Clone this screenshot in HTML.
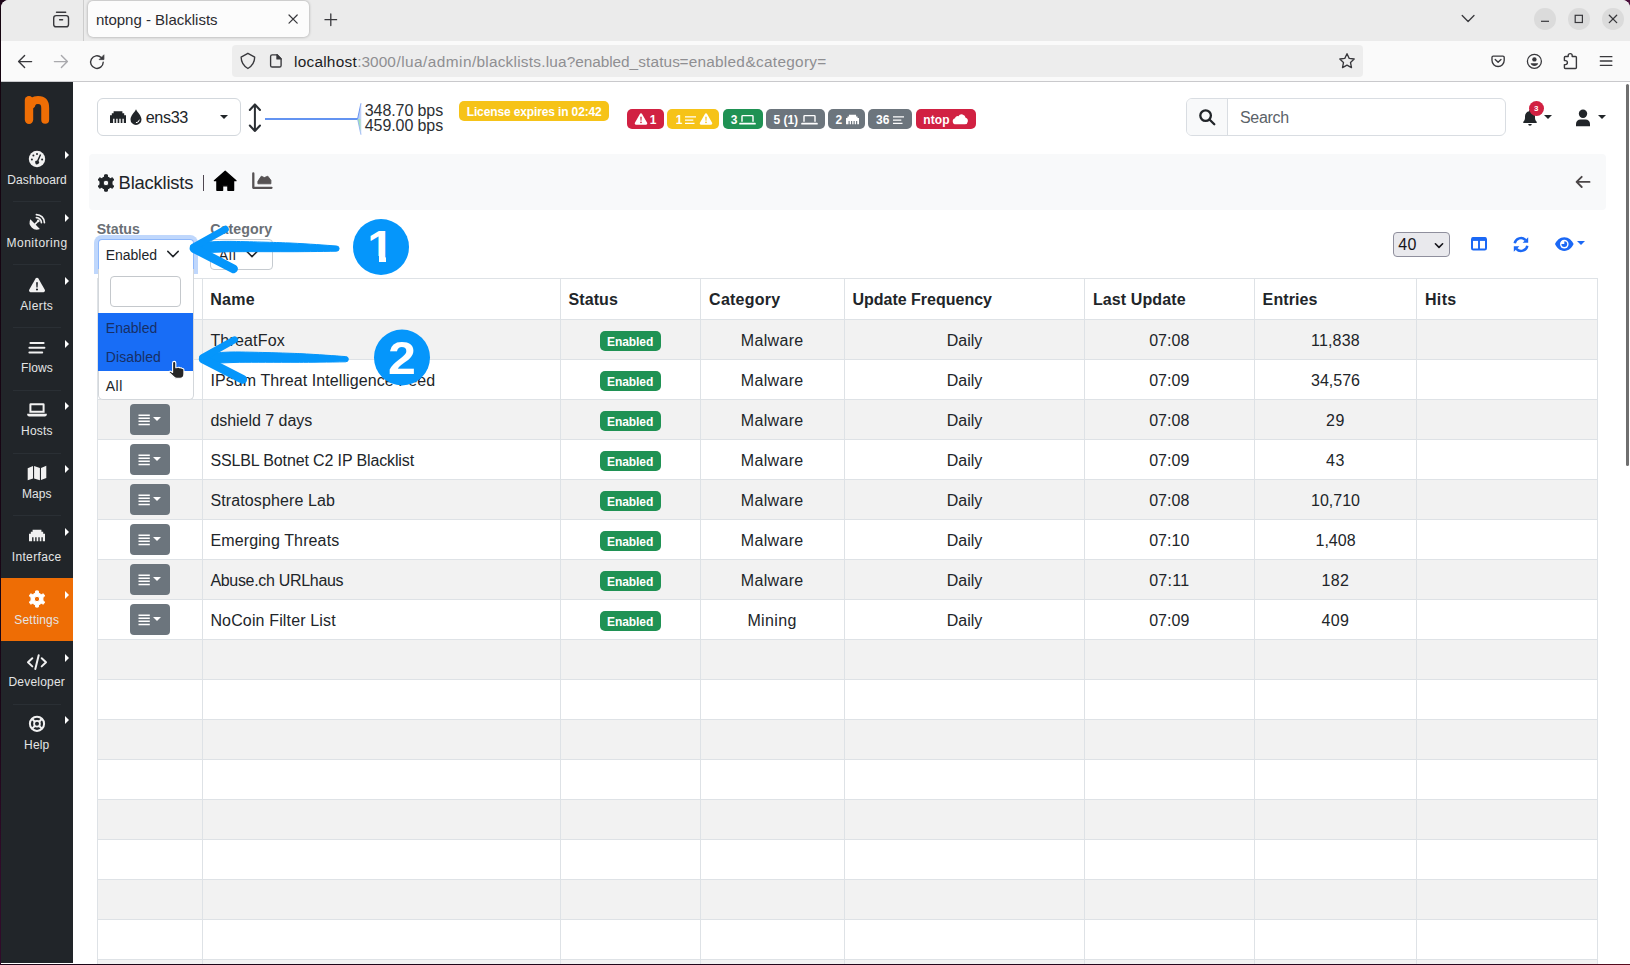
<!DOCTYPE html>
<html lang="en"><head><meta charset="utf-8"><title>ntopng - Blacklists</title>
<style>
html,body{margin:0;padding:0}
body{width:1630px;height:965px;overflow:hidden;position:relative;background:#fff;font-family:"Liberation Sans",sans-serif;color:#212529;font-size:16px}
div,span,svg{box-sizing:border-box}
.a{position:absolute}
.t{position:absolute;white-space:nowrap;line-height:20px;height:20px}
.c{text-align:center}
svg{position:absolute;overflow:visible}
.side{color:#e4e5e6;font-size:12px}
.sep{position:absolute;left:13px;width:48px;height:1px;background:#2a2f34}
.car{position:absolute;left:65px;width:0;height:0;border-left:4.5px solid #fff;border-top:4px solid transparent;border-bottom:4px solid transparent}
.bdg{position:absolute;top:109px;height:20px;border-radius:5px}
.bt{position:absolute;color:#fff;font-weight:700;font-size:12px;white-space:nowrap;line-height:20px}
.row{position:absolute;left:97px;width:1501px;height:40px;border-bottom:1px solid #dee2e6}
.row.s{background:#f2f2f2}
.vl{position:absolute;top:278px;width:1px;height:687px;background:#dee2e6}
.en{position:absolute;left:600px;width:61px;height:20px;border-radius:5px;background:#1f9254}
.ab{position:absolute;left:130px;width:40px;height:31px;border-radius:4px;background:#6c757d}
</style></head><body>
<div class="a" style="left:0;top:0;width:1630px;height:965px;background:linear-gradient(90deg,#1c0517 0,#2a0820 1500px,#4c0f3c 1630px)"></div>
<div class="a" style="left:1px;top:0;width:1629px;height:963.600px;background:#fff;border-radius:8px 8px 0 0;overflow:hidden">
<div class="a" style="left:0;top:0;width:1629px;height:41px;background:#ebebeb"></div>
<div class="a" style="left:0;top:41px;width:1629px;height:40px;background:#fafafa"></div>
<div class="a" style="left:0;top:81px;width:1629px;height:1px;background:#c9c9cc"></div>
</div>
<div class="a" style="left:83px;top:0;width:1px;height:41px;background:#cdcdcd"></div>
<svg style="left:50px;top:8px" width="22" height="22" viewBox="0 0 22 22" fill="none" stroke="#38383c" stroke-width="1.4" stroke-linecap="round"><rect x="3.7" y="7.6" width="14.8" height="11.2" rx="2.4"></rect><path d="M6.5 4.3h9.2M9.6 11.7h3"></path></svg>
<div class="a" style="left:88px;top:1px;width:221px;height:36px;background:#fcfcfc;border-radius:5px;box-shadow:0 0 3px rgba(0,0,0,.35)"></div>
<span class="t " style="left: 95.9px; top: 10.2px; font-size: 15px; color: rgb(43, 43, 48);">ntopng - Blacklists</span>
<svg style="left:288px;top:14px" width="10" height="10" viewBox="0 0 10 10" stroke="#38383c" stroke-width="1.2" stroke-linecap="round"><path d="M1 1l8.2 8.2M9.2 1L1 9.2"></path></svg>
<svg style="left:324px;top:13px" width="14" height="14" viewBox="0 0 14 14" stroke="#38383c" stroke-width="1.3" stroke-linecap="round"><path d="M1 6.7h11.6M6.8 0.9v11.6"></path></svg>
<svg style="left:1461px;top:14px" width="14" height="10" viewBox="0 0 14 10" fill="none" stroke="#38383c" stroke-width="1.3" stroke-linecap="round" stroke-linejoin="round"><path d="M1.2 1.5l5.9 6 5.9-6"></path></svg>
<div class="a" style="left:1534.2px;top:8.2px;width:21.6px;height:21.6px;border-radius:50%;background:#dbdbdb"></div>
<div class="a" style="left:1568.0px;top:8.2px;width:21.6px;height:21.6px;border-radius:50%;background:#dbdbdb"></div>
<div class="a" style="left:1602.2px;top:8.2px;width:21.6px;height:21.6px;border-radius:50%;background:#dbdbdb"></div>
<svg style="left:1540px;top:14px" width="10" height="10" viewBox="0 0 10 10" stroke="#38383c" stroke-width="1.2"><path d="M1 7.3h8"></path></svg>
<svg style="left:1574px;top:14px" width="10" height="10" viewBox="0 0 10 10" fill="none" stroke="#38383c" stroke-width="1.2"><rect x="1.2" y="1.3" width="7.2" height="7.2"></rect></svg>
<svg style="left:1608px;top:14px" width="10" height="10" viewBox="0 0 10 10" stroke="#38383c" stroke-width="1.3" stroke-linecap="round"><path d="M1.3 1.2l7.4 7.4M8.7 1.2L1.3 8.6"></path></svg>
<svg style="left:16px;top:52px" width="20" height="20" viewBox="0 0 20 20" fill="none" stroke="#38383c" stroke-width="1.4" stroke-linecap="round" stroke-linejoin="round"><path d="M15.6 9.6H3M8.6 3.6l-6 6 6 6"></path></svg>
<svg style="left:52px;top:52px" width="20" height="20" viewBox="0 0 20 20" fill="none" stroke="#a9a9ad" stroke-width="1.4" stroke-linecap="round" stroke-linejoin="round"><path d="M2.4 9.6H15M9.4 3.6l6 6-6 6"></path></svg>
<svg style="left:87px;top:52px" width="20" height="20" viewBox="0 0 20 20" fill="none" stroke="#38383c" stroke-width="1.4" stroke-linecap="round"><path d="M16.2 10.2a6.3 6.3 0 1 1-2-4.7"></path><path d="M16.9 3.2v4.4h-4.4z" fill="#38383c" stroke-linejoin="round" stroke-width="0.8"></path></svg>
<div class="a" style="left:232px;top:45px;width:1131px;height:32px;background:#ededed;border-radius:4px"></div>
<svg style="left:0;top:0" width="300" height="90" viewBox="0 0 300 90" fill="none" stroke="#38383c" stroke-width="1.350" stroke-linejoin="round"><path d="M247.900 53.300L254.700 57.100C254.600 62.600 252.400 66 247.900 68.500C243.400 66 241.200 62.600 241.100 57.100Z"></path><path d="M272.200 54.800H277L281.100 58.900V65.400A1.600 1.600 0 0 1 279.500 67H272.200A1.600 1.600 0 0 1 270.600 65.400V56.400A1.600 1.600 0 0 1 272.200 54.800Z"></path><path d="M277 54.800V58.900H281.100Z" fill="#38383c"></path></svg>
<span class="t " style="left: 294px; top: 51.8px; font-size: 15.4px; color: rgb(28, 28, 31); letter-spacing: 0.24px;">localhost</span>
<span class="t " style="left: 357.2px; top: 51.8px; font-size: 15.4px; color: rgb(143, 143, 146); letter-spacing: 0.02px;">:3000</span>
<span class="t " style="left: 396.4px; top: 51.8px; font-size: 15.4px; color: rgb(143, 143, 146); letter-spacing: 0.47px;">/lua</span>
<span class="t " style="left: 423.1px; top: 51.8px; font-size: 15.4px; color: rgb(143, 143, 146); letter-spacing: 0.45px;">/admin</span>
<span class="t " style="left: 472px; top: 51.8px; font-size: 15.4px; color: rgb(143, 143, 146); letter-spacing: 0.22px;">/blacklists.lua</span>
<span class="t " style="left: 566.8px; top: 51.8px; font-size: 15.4px; color: rgb(143, 143, 146); letter-spacing: -0.08px;">?enabled</span>
<span class="t " style="left: 629.5px; top: 51.8px; font-size: 15.4px; color: rgb(143, 143, 146); letter-spacing: 0.15px;">_status</span>
<span class="t " style="left: 679.6px; top: 51.8px; font-size: 15.4px; color: rgb(143, 143, 146); letter-spacing: 0.19px;">=enabled</span>
<span class="t " style="left: 745.5px; top: 51.8px; font-size: 15.4px; color: rgb(143, 143, 146); letter-spacing: 0.28px;">&amp;category=</span>
<svg style="left:1338px;top:52px" width="18" height="18" viewBox="0 0 18 18" fill="none" stroke="#38383c" stroke-width="1.3" stroke-linejoin="round"><path d="M9 1.700l2.200 4.700 5 .6-3.700 3.500 1 5.100L9 13.100l-4.500 2.500 1-5.100L1.800 7l5-.6z"></path></svg>
<svg style="left:1490px;top:53px" width="16.200" height="16.200" viewBox="0 0 18 18" fill="none" stroke="#38383c" stroke-width="1.5" stroke-linecap="round" stroke-linejoin="round"><path d="M3.600 3.500h10.800a1.400 1.400 0 0 1 1.400 1.400v3.300a6.800 6.800 0 0 1-13.600 0V4.900a1.400 1.400 0 0 1 1.400-1.400z"></path><path d="M5.800 7.300L9 10.400l3.200-3.100"></path></svg>
<svg style="left:1525px;top:52px" width="18" height="18" viewBox="0 0 18 18" fill="none" stroke="#38383c" stroke-width="1.3"><circle cx="9.400" cy="9.300" r="7"></circle><circle cx="9.400" cy="7.400" r="2.200" fill="#38383c" stroke="none"></circle><path d="M5.600 11.300h7.600c-.5 1.800-2 2.800-3.800 2.800s-3.300-1-3.800-2.800z" fill="#38383c" stroke="none"></path></svg>
<svg style="left:1561px;top:51px" width="18" height="20" viewBox="0 0 18 20" fill="none" stroke="#38383c" stroke-width="1.4" stroke-linejoin="round"><path d="M7.200 5.500V4.600a2 2 0 0 1 4 0v.9h3.300a.9.900 0 0 1 .9.900v10.200a.9.900 0 0 1-.9.900H4.300a.9.900 0 0 1-.9-.9v-3h1a2 2 0 0 0 0-4h-1V6.400a.9.900 0 0 1 .9-.9z"></path></svg>
<svg style="left:1599px;top:53px" width="16" height="16" viewBox="0 0 16 16" stroke="#38383c" stroke-width="1.3" stroke-linecap="round"><path d="M1.300 3.700h11.600M1.300 8h11.600M1.300 12.300h11.600"></path></svg>
<div class="a" style="left:1px;top:82px;width:72px;height:881px;background:#212529"></div>
<svg style="left:20px;top:90px" width="34" height="40" viewBox="20 90 34 40" fill="none" stroke="#ef6e05" stroke-linecap="round" stroke-linejoin="round"><path d="M29 100.100V119.700" stroke-width="8.400"></path><path d="M31.500 104.500Q32.500 100 38 100Q45.200 100 45.200 108V119.800" stroke-width="7.900"></path></svg>
<div class="a" style="left:1px;top:578px;width:72px;height:63px;background:#ee6d05"></div>
<div class="sep" style="top:201px"></div>
<div class="sep" style="top:264px"></div>
<div class="sep" style="top:327px"></div>
<div class="sep" style="top:390px"></div>
<div class="sep" style="top:453px"></div>
<div class="sep" style="top:515px"></div>
<div class="sep" style="top:704px"></div>
<div class="car" style="top:151px"></div>
<div class="car" style="top:214px"></div>
<div class="car" style="top:276.5px"></div>
<div class="car" style="top:339.5px"></div>
<div class="car" style="top:402px"></div>
<div class="car" style="top:465px"></div>
<div class="car" style="top:528px"></div>
<div class="car" style="top:591px"></div>
<div class="car" style="top:653.5px"></div>
<div class="car" style="top:716px"></div>
<span class="t side" style="left: 7.3px; top: 170.3px; font-size: 12px; letter-spacing: 0.09px;">Dashboard</span>
<span class="t side" style="left: 6.5px; top: 233.3px; font-size: 12px; letter-spacing: 0.51px;">Monitoring</span>
<span class="t side" style="left: 20.2px; top: 296.3px; font-size: 12px; letter-spacing: 0.4px;">Alerts</span>
<span class="t side" style="left: 21px; top: 358px; font-size: 12px; letter-spacing: 0.09px;">Flows</span>
<span class="t side" style="left: 21px; top: 420.9px; font-size: 12px; letter-spacing: 0.22px;">Hosts</span>
<span class="t side" style="left: 22px; top: 484.2px; font-size: 12px; letter-spacing: 0.04px;">Maps</span>
<span class="t side" style="left: 11.7px; top: 547.1px; font-size: 12px; letter-spacing: 0.36px;">Interface</span>
<span class="t side" style="left: 14.3px; top: 610.2px; font-size: 12px; letter-spacing: 0.19px;">Settings</span>
<span class="t side" style="left: 8.5px; top: 672.4px; font-size: 12px; letter-spacing: 0.2px;">Developer</span>
<span class="t side" style="left: 24.1px; top: 735.3px; font-size: 12px; letter-spacing: 0.15px;">Help</span>
<svg style="left:28px;top:150px" width="18" height="18" viewBox="0 0 18 18"><circle cx="9" cy="9" r="8.200" fill="#f1f1f1"></circle><g fill="#212529"><circle cx="3.900" cy="9.600" r="1"></circle><circle cx="5.400" cy="5.600" r="1"></circle><circle cx="9" cy="4" r="1"></circle><circle cx="14.100" cy="9.600" r="1"></circle><path d="M11.900 4.200l1.300.6-2.700 6.300a1.900 1.900 0 1 1-1.400-.6z"></path></g></svg>
<svg style="left:28px;top:213px" width="18" height="18" viewBox="0 0 18 18" fill="none"><path d="M2.300 6.300a7.200 7.200 0 0 0 9.600 9.600z" fill="#f1f1f1"></path><path d="M7.100 11.100l2.800-2.800" stroke="#f1f1f1" stroke-width="1.600" stroke-linecap="round"></path><circle cx="10.300" cy="7.900" r="1.300" fill="#f1f1f1"></circle><path d="M8.400 4.600a5 5 0 0 1 5 5M8.400 1.600a8 8 0 0 1 8 8" stroke="#f1f1f1" stroke-width="1.700" stroke-linecap="round"></path></svg>
<svg style="left:28px;top:276px" width="18" height="18" viewBox="0 0 18 18"><path d="M9 1.800c.6 0 1.100.3 1.400.8l6.400 11.200c.6 1.100-.2 2.400-1.400 2.400H2.600c-1.200 0-2-1.300-1.400-2.400L7.600 2.600c.3-.5.800-.8 1.400-.8z" fill="#f1f1f1"></path><path d="M8.100 6.200h1.800l-.3 5.200H8.400zM9 12.400a1.100 1.100 0 1 1 0 2.200 1.100 1.100 0 0 1 0-2.200z" fill="#212529"></path></svg>
<svg style="left:27px;top:339px" width="20" height="18" viewBox="0 0 20 18" stroke="#f1f1f1" stroke-width="2" stroke-linecap="round"><path d="M3.400 4h13.200M2.400 8.800h15M2.400 13.600h12.800"></path></svg>
<svg style="left:26px;top:401px" width="22" height="18" viewBox="0 0 22 18"><path d="M4.700 2.300h12.600a1.300 1.300 0 0 1 1.300 1.300v8.100H3.400V3.600a1.300 1.300 0 0 1 1.300-1.300zm.7 2v5.400h11.200V4.300z" fill="#f1f1f1" fill-rule="evenodd"></path><path d="M1.200 12.800h19.600v.6a2 2 0 0 1-2 2H3.200a2 2 0 0 1-2-2z" fill="#f1f1f1"></path></svg>
<svg style="left:27px;top:464px" width="20" height="18" viewBox="0 0 20 18" fill="#f1f1f1"><path d="M.700 4.300l5.300-2.200v12.300L.700 16.200zM7.100 2l5.800 1.900v12.400l-5.800-1.900zM14 3.900l5.300-2.200v12.200L14 16.100z"></path></svg>
<svg style="left:28px;top:528px" width="18" height="16" viewBox="0 0 18 16" fill="#f1f1f1"><path d="M4.600 2.300h8.800v2h1.800v2h1.800v7.600h-2.200V9.800h-1.400v4.100h-1.700V9.800h-1.400v4.100H8.600V9.800H7.200v4.100H5.500V9.800H4.100v4.100H1V6.300h1.800v-2h1.800z" transform="translate(0,-.6)"></path></svg>
<svg style="left:28px;top:590px" width="18" height="18" viewBox="0 0 18 18"><path d="M7.36 3.12L7.72 0.90L10.28 0.90L10.64 3.12L13.27 4.64L15.37 3.84L16.66 6.06L14.91 7.48L14.91 10.52L16.66 11.94L15.37 14.16L13.27 13.36L10.64 14.88L10.28 17.10L7.72 17.10L7.36 14.88L4.73 13.36L2.63 14.16L1.34 11.94L3.09 10.52L3.09 7.48L1.34 6.06L2.63 3.84L4.73 4.64ZM11.70 9.00A2.7 2.7 0 1 0 6.30 9.00A2.7 2.7 0 1 0 11.70 9.00Z" fill="#fff" fill-rule="evenodd" stroke="#fff" stroke-width="1" stroke-linejoin="round"></path></svg>
<svg style="left:26px;top:653px" width="22" height="18" viewBox="0 0 22 18" fill="none" stroke="#f1f1f1" stroke-width="2" stroke-linecap="round" stroke-linejoin="round"><path d="M6.300 5.200L2 9.300l4.300 4.100M15.700 5.200L20 9.300l-4.300 4.100M12.700 2.300L9.300 16"></path></svg>
<svg style="left:28px;top:715px" width="18" height="18" viewBox="0 0 18 18" fill="none" stroke="#f1f1f1"><circle cx="9" cy="8.800" r="7.100" stroke-width="2"></circle><circle cx="9" cy="8.800" r="2.900" stroke-width="1.800"></circle><path d="M4 3.800l2.900 2.900M14 3.800l-2.900 2.900M4 13.800l2.900-2.900M14 13.800l-2.900-2.900" stroke-width="2"></path></svg>
<div class="a" style="left:97px;top:98px;width:144px;height:38px;border:1px solid #d3d8dd;border-radius:6px;background:#fff"></div>
<svg style="left:109px;top:109px" width="18" height="16" viewBox="0 0 18 16" fill="#212529"><path d="M4.600 2.300h8.800v2h1.800v2h1.800v7.600h-2.200V9.800h-1.400v4.100h-1.700V9.800h-1.400v4.100H8.600V9.800H7.200v4.100H5.500V9.800H4.100v4.100H1V6.300h1.800v-2h1.800z"></path></svg>
<svg style="left:129px;top:108px" width="14" height="18" viewBox="0 0 14 18"><path d="M7 1.200c1.400 3.200 5.500 6.300 5.500 10.200a5.500 5.500 0 0 1-11 0C1.500 7.500 5.600 4.400 7 1.200z" fill="#212529"></path><path d="M7.300 14.700a3.100 3.100 0 0 0 3-2.600" fill="none" stroke="#fff" stroke-width="1" stroke-linecap="round"></path></svg>
<span class="t " style="left: 145.7px; top: 107.2px; font-size: 16.2px; color: rgb(33, 37, 41); letter-spacing: -0.36px;">ens33</span>
<div class="a" style="left:220px;top:114.800px;width:0;height:0;border-top:4.700px solid #212529;border-left:4.300px solid transparent;border-right:4.300px solid transparent"></div>
<svg style="left:246px;top:102px" width="18" height="32" viewBox="0 0 18 32" fill="none" stroke="#2a2e33" stroke-width="2" stroke-linecap="round" stroke-linejoin="round"><path d="M8.900 2.500v26.500M3.800 8L8.900 2.500l5.100 5.500M3.800 23.500L8.900 29l5.100-5.500"></path></svg>
<svg style="left:264px;top:100px" width="100" height="36" viewBox="0 0 100 36" fill="none"><path d="M1 18.900h93" stroke="#2f6fed" stroke-width="1.500"></path><path d="M93.600 18.900L96.900 3.400V18.900Z" fill="#b9cdf8"></path><path d="M93.600 18.900L96.900 34.600V18.900Z" fill="#a5e3b6"></path><path d="M93.600 18.900L96.900 3.400" stroke="#5d8df0" stroke-width=".9"></path><path d="M93.600 18.900L96.900 34.600" stroke="#8fb0f3" stroke-width=".9"></path><path d="M96.900 3.400V34.600" stroke="#c5d6fa" stroke-width=".7"></path></svg>
<span class="t " style="left: 364.8px; top: 100.7px; font-size: 16px; color: rgb(43, 47, 51); letter-spacing: -0.09px;">348.70 bps</span>
<span class="t " style="left: 364.8px; top: 115.9px; font-size: 16px; color: rgb(43, 47, 51); letter-spacing: -0.09px;">459.00 bps</span>
<div class="a" style="left:459px;top:101px;width:150px;height:20px;border-radius:5px;background:#f6c318"></div>
<span class="t " style="left: 466.7px; top: 101.9px; font-size: 12px; font-weight: 700; color: rgb(255, 255, 255); letter-spacing: -0.13px;">License expires in 02:42</span>
<div class="bdg" style="left:627px;width:36.6px;background:#d12142"></div>
<div class="bdg" style="left:667px;width:51.6px;background:#f6c318"></div>
<div class="bdg" style="left:723px;width:39.7px;background:#1f9254"></div>
<div class="bdg" style="left:766px;width:58.7px;background:#6c757d"></div>
<div class="bdg" style="left:828.3px;width:36.5px;background:#6c757d"></div>
<div class="bdg" style="left:868px;width:43.5px;background:#6c757d"></div>
<div class="bdg" style="left:916px;width:59.7px;background:#d12142"></div>
<svg style="left:634.3px;top:112.3px" width="14" height="14" viewBox="0 0 14 14"><path d="M7 1.300c.5 0 .9.200 1.100.7l5 8.800c.5.900-.1 1.900-1.100 1.900H2c-1 0-1.600-1-1.100-1.900l5-8.800c.2-.5.600-.7 1.100-.7z" fill="#fff"></path><path d="M6.300 4.700h1.400l-.25 4H6.550zM7 9.500a.85.85 0 1 1 0 1.700.85.850 0 0 1 0-1.700z" fill="#d12142"></path></svg>
<span class="t " style="left: 649.8px; top: 110.2px; font-size: 12px; font-weight: 700; color: rgb(255, 255, 255); letter-spacing: -1.09px;">1</span>
<span class="t " style="left: 675.7px; top: 110.2px; font-size: 12px; font-weight: 700; color: rgb(255, 255, 255); letter-spacing: -1.19px;">1</span>
<svg style="left:684.2px;top:114px" width="13" height="12" viewBox="0 0 13 12" stroke="#fff" stroke-width="1.300"><path d="M1 2.800h11M1 6.100h8.3M1 9.400h9.5"></path></svg>
<svg style="left:698.5px;top:112.3px" width="14" height="14" viewBox="0 0 14 14"><path d="M7 1.300c.5 0 .9.200 1.100.7l5 8.800c.5.900-.1 1.900-1.100 1.900H2c-1 0-1.600-1-1.100-1.900l5-8.800c.2-.5.600-.7 1.100-.7z" fill="#fff"></path><path d="M6.300 4.700h1.400l-.25 4H6.550zM7 9.500a.85.85 0 1 1 0 1.700.85.850 0 0 1 0-1.700z" fill="#f6c318"></path></svg>
<span class="t " style="left: 730.8px; top: 110.2px; font-size: 12px; font-weight: 700; color: rgb(255, 255, 255); letter-spacing: -0.29px;">3</span>
<svg style="left:739.3px;top:113.6px" width="17" height="12" viewBox="0 0 17 12" fill="none" stroke="#fff"><path d="M3 7.700V2.400a.8.800 0 0 1 .8-.8h9.400a.8.800 0 0 1 .8.800v5.300" stroke-width="1.400"></path><path d="M1 9.700h15" stroke-width="1.700" stroke-linecap="round"></path></svg>
<span class="t " style="left: 773.5px; top: 110.2px; font-size: 12px; font-weight: 700; color: rgb(255, 255, 255); letter-spacing: -0.04px;">5 (1)</span>
<svg style="left:801px;top:113.6px" width="17" height="12" viewBox="0 0 17 12" fill="none" stroke="#fff"><path d="M3 7.700V2.400a.8.800 0 0 1 .8-.8h9.400a.8.800 0 0 1 .8.800v5.300" stroke-width="1.400"></path><path d="M1 9.700h15" stroke-width="1.700" stroke-linecap="round"></path></svg>
<span class="t " style="left: 835.5px; top: 110.2px; font-size: 12px; font-weight: 700; color: rgb(255, 255, 255); letter-spacing: -0.29px;">2</span>
<svg style="left:844.500px;top:113px" width="15" height="13" viewBox="0 0 18 16" fill="#fff"><path d="M4.600 2.300h8.800v2h1.800v2h1.800v7.600h-2.200V9.800h-1.400v4.100h-1.700V9.800h-1.400v4.100H8.600V9.800H7.200v4.100H5.500V9.800H4.100v4.100H1V6.300h1.800v-2h1.800z"></path></svg>
<span class="t " style="left: 875.9px; top: 110.2px; font-size: 12px; font-weight: 700; color: rgb(255, 255, 255); letter-spacing: 0.12px;">36</span>
<svg style="left:892.4px;top:114px" width="13" height="12" viewBox="0 0 13 12" stroke="#fff" stroke-width="1.300"><path d="M1 2.800h11M1 6.100h8.3M1 9.400h9.5"></path></svg>
<span class="t " style="left: 923.2px; top: 110.2px; font-size: 12px; font-weight: 700; color: rgb(255, 255, 255); letter-spacing: 0.15px;">ntop</span>
<svg style="left:951.800px;top:113.400px" width="16.200" height="12.600" viewBox="0 0 18 14"><path d="M4.300 12.600a3.400 3.400 0 0 1-.9-6.700 2.700 2.700 0 0 1 3.700-2.300 4.300 4.300 0 0 1 8 1.800 3.700 3.700 0 0 1-.9 7.200z" fill="#fff"></path></svg>
<div class="a" style="left:1186px;top:98px;width:320px;height:38px;border:1px solid #d9dde2;border-radius:6px;background:#fff;overflow:hidden"><div class="a" style="left:0;top:0;width:41px;height:36px;background:#f8f9fa;border-right:1px solid #d9dde2"></div></div>
<svg style="left:1198px;top:108px" width="18" height="18" viewBox="0 0 18 18" fill="none" stroke="#212529" stroke-width="2.300" stroke-linecap="round"><circle cx="7.600" cy="7.600" r="5.300"></circle><path d="M11.700 11.700l4.600 4.600"></path></svg>
<span class="t " style="left: 1240px; top: 107.5px; font-size: 16px; color: rgb(91, 98, 105); letter-spacing: -0.3px;">Search</span>
<svg style="left:1521px;top:108px" width="18" height="20" viewBox="0 0 18 20" fill="#212529"><path d="M9 1.800c.5 0 .9.400.9.900v.5c2.400.4 4.100 2.500 4.100 5v1.500c0 1.600.6 3 1.700 4.100.4.400.1 1.200-.5 1.200H2.800c-.6 0-.9-.8-.5-1.200C3.400 12.700 4 11.300 4 9.700V8.200c0-2.500 1.700-4.600 4.100-5v-.5c0-.5.400-.9.900-.9zM7.200 16h3.600a1.800 1.800 0 0 1-3.600 0z"></path></svg>
<div class="a" style="left:1529px;top:100.500px;width:15px;height:15px;border-radius:50%;background:#d12142"></div>
<span class="t " style="left: 1534.1px; top: 98.9px; font-size: 8px; font-weight: 700; color: rgb(255, 255, 255); letter-spacing: 0.25px;">3</span>
<div class="a" style="left:1544px;top:115px;width:0;height:0;border-top:4.500px solid #212529;border-left:4.500px solid transparent;border-right:4.500px solid transparent"></div>
<svg style="left:1575px;top:109px" width="16" height="18" viewBox="0 0 16 18" fill="#212529"><circle cx="8" cy="4.800" r="4.200"></circle><path d="M1 17.200v-2.300c0-2.500 2-4.300 4.500-4.300h5c2.500 0 4.500 1.800 4.500 4.300v2.300z"></path></svg>
<div class="a" style="left:1597.500px;top:115px;width:0;height:0;border-top:4.500px solid #212529;border-left:4.500px solid transparent;border-right:4.500px solid transparent"></div>
<div class="a" style="left:1626px;top:84px;width:3px;height:382px;border-radius:2px;background:#6f6f6f"></div>
<div class="a" style="left:89px;top:154px;width:1517px;height:55.500px;border-radius:4px;background:#f8f9fa"></div>
<svg style="left:96.500px;top:173.500px" width="18" height="18" viewBox="0 0 18 18"><path d="M7.33 3.03L7.70 0.80L10.30 0.80L10.67 3.03L13.34 4.57L15.45 3.78L16.75 6.03L15.01 7.46L15.01 10.54L16.75 11.97L15.45 14.22L13.34 13.43L10.67 14.97L10.30 17.20L7.70 17.20L7.33 14.97L4.66 13.43L2.55 14.22L1.25 11.97L2.99 10.54L2.99 7.46L1.25 6.03L2.55 3.78L4.66 4.57ZM11.80 9.00A2.8 2.8 0 1 0 6.20 9.00A2.8 2.8 0 1 0 11.80 9.00Z" fill="#212529" fill-rule="evenodd" stroke="#212529" stroke-width="1" stroke-linejoin="round"></path></svg>
<span class="t " style="left: 118.6px; top: 172.8px; font-size: 18.4px; color: rgb(33, 37, 41); letter-spacing: -0.2px;">Blacklists</span>
<div class="a" style="left:202.800px;top:174.800px;width:1.200px;height:15.800px;background:#4f4750"></div>
<svg style="left:0;top:0" width="300" height="200" viewBox="0 0 300 200"><path d="M225.200 171.300L236 180.700H233.600V190.300H227.900V185.800H222.600V190.300H216.900V180.700H214.400Z" fill="#000" stroke="#000" stroke-width="1.300" stroke-linejoin="round"></path></svg>
<svg style="left:0;top:0" width="300" height="200" viewBox="0 0 300 200"><path d="M253.300 173.400V187.800H271.500" fill="none" stroke="#565253" stroke-width="2.300" stroke-linecap="round" stroke-linejoin="round"></path><path d="M257.900 183.800V181.300L261.300 176.200L264.300 177.600L267.800 176.200L270.900 180.300V183.800Z" fill="#565253" stroke="#565253" stroke-width=".9" stroke-linejoin="round"></path></svg>
<svg style="left:1574px;top:174px" width="18" height="16" viewBox="0 0 18 16" fill="none" stroke="#4b4647" stroke-width="1.900" stroke-linecap="round" stroke-linejoin="round"><path d="M15.500 7.900H3M7.700 2.800L2.600 7.900l5.100 5.100"></path></svg>
<span class="t " style="left: 96.7px; top: 219.2px; font-size: 14.2px; font-weight: 700; color: rgb(106, 111, 117); letter-spacing: -0.03px;">Status</span>
<span class="t " style="left: 210.2px; top: 219.2px; font-size: 14.2px; font-weight: 700; color: rgb(106, 111, 117); letter-spacing: 0.08px;">Category</span>
<div class="a" style="left:97.500px;top:239.300px;width:96.200px;height:30.300px;border:1px solid #8fb8fb;border-bottom:none;border-radius:4px 4px 0 0;background:#fff;box-shadow:0 0 0 4px #bfd7fc"></div>
<span class="t " style="left: 105.7px; top: 245.1px; font-size: 14px; color: rgb(33, 37, 41); letter-spacing: -0.01px;">Enabled</span>
<svg style="left:166px;top:249px" width="14" height="10" viewBox="0 0 14 10" fill="none" stroke="#212529" stroke-width="1.500" stroke-linecap="round" stroke-linejoin="round"><path d="M1.800 2.400l5.200 5.200 5.200-5.200"></path></svg>
<div class="a" style="left:210px;top:238.900px;width:63px;height:31px;border:1px solid #c6cbd0;border-radius:4px;background:#fff"></div>
<span class="t " style="left: 218.7px; top: 245.1px; font-size: 14px; color: rgb(33, 37, 41); letter-spacing: 0.75px;">All</span>
<svg style="left:244.500px;top:249px" width="14" height="10" viewBox="0 0 14 10" fill="none" stroke="#212529" stroke-width="1.500" stroke-linecap="round" stroke-linejoin="round"><path d="M1.800 2.400l5.200 5.200 5.200-5.200"></path></svg>
<div class="a" style="left:1393px;top:232.200px;width:57px;height:24.500px;border:1px solid #8f8f9d;border-radius:4px;background:#e9e9ed"></div>
<span class="t " style="left: 1398.3px; top: 235.1px; font-size: 16px; color: rgb(21, 20, 26); letter-spacing: 0.35px;">40</span>
<svg style="left:1432.900px;top:240.700px" width="12" height="10" viewBox="0 0 12 10" fill="none" stroke="#15141a" stroke-width="1.600" stroke-linecap="round" stroke-linejoin="round"><path d="M2.400 2.800l3.600 3.600 3.600-3.600"></path></svg>
<svg style="left:1470px;top:236.300px" width="18" height="16" viewBox="0 0 18 16" fill="none" stroke="#1b68f5"><rect x="2" y="2" width="14" height="11.500" rx="1.300" stroke-width="2"></rect><path d="M2 3.200h14" stroke-width="3.400"></path><path d="M9 3v10" stroke-width="1.900"></path></svg>
<svg style="left:1512px;top:235.600px" width="18" height="17" viewBox="0 0 18 17" fill="none" stroke="#1b68f5" stroke-width="2.500"><path d="M2.700 7.300a6.300 6.300 0 0 1 10.900-3.100"></path><path d="M15.300 9.700a6.300 6.300 0 0 1-10.900 3.100"></path><path d="M16.200 1.200v5.600h-5.600z" fill="#1b68f5" stroke="none"></path><path d="M1.800 15.800v-5.600h5.600z" fill="#1b68f5" stroke="none"></path></svg>
<svg style="left:1554px;top:235.500px" width="21" height="17" viewBox="0 0 21 17"><path d="M10.300 1.200c4.500 0 7.800 3.300 9.300 6.900-1.500 3.600-4.800 6.900-9.300 6.900S2.500 11.700 1 8.100c1.500-3.600 4.800-6.900 9.300-6.900z" fill="#1b68f5"></path><circle cx="10.300" cy="8.100" r="4.300" fill="#fff"></circle><circle cx="10.300" cy="8.100" r="2.900" fill="#1b68f5"></circle><path d="M10.300 8.100V4.600a3.500 3.500 0 0 0-3.500 3.500z" fill="#fff"></path></svg>
<div class="a" style="left:1577px;top:241px;width:0;height:0;border-top:4.500px solid #1b68f5;border-left:4px solid transparent;border-right:4px solid transparent"></div>
<div class="a" style="left:97px;top:278px;width:1501px;height:1px;background:#dee2e6"></div>
<div class="a" style="left:97px;top:319px;width:1501px;height:1px;background:#dee2e6"></div>
<div class="row s" style="top:320px"></div>
<div class="row" style="top:360px"></div>
<div class="row s" style="top:400px"></div>
<div class="row" style="top:440px"></div>
<div class="row s" style="top:480px"></div>
<div class="row" style="top:520px"></div>
<div class="row s" style="top:560px"></div>
<div class="row" style="top:600px"></div>
<div class="row s" style="top:640px"></div>
<div class="row" style="top:680px"></div>
<div class="row s" style="top:720px"></div>
<div class="row" style="top:760px"></div>
<div class="row s" style="top:800px"></div>
<div class="row" style="top:840px"></div>
<div class="row s" style="top:880px"></div>
<div class="row" style="top:920px"></div>
<div class="row s" style="top:960px"></div>
<div class="vl" style="left:97px"></div>
<div class="vl" style="left:202px"></div>
<div class="vl" style="left:560px"></div>
<div class="vl" style="left:700px"></div>
<div class="vl" style="left:844px"></div>
<div class="vl" style="left:1084px"></div>
<div class="vl" style="left:1254px"></div>
<div class="vl" style="left:1416px"></div>
<div class="vl" style="left:1597px"></div>
<span class="t " style="left: 210.3px; top: 289.8px; font-size: 16px; font-weight: 700; color: rgb(33, 37, 41); letter-spacing: 0.26px;">Name</span>
<span class="t " style="left: 568.4px; top: 289.8px; font-size: 16px; font-weight: 700; color: rgb(33, 37, 41); letter-spacing: 0.12px;">Status</span>
<span class="t " style="left: 709.1px; top: 289.8px; font-size: 16px; font-weight: 700; color: rgb(33, 37, 41); letter-spacing: 0.23px;">Category</span>
<span class="t " style="left: 852.5px; top: 289.8px; font-size: 16px; font-weight: 700; color: rgb(33, 37, 41); letter-spacing: -0.01px;">Update Frequency</span>
<span class="t " style="left: 1092.9px; top: 289.8px; font-size: 16px; font-weight: 700; color: rgb(33, 37, 41); letter-spacing: 0.11px;">Last Update</span>
<span class="t " style="left: 1262.6px; top: 289.8px; font-size: 16px; font-weight: 700; color: rgb(33, 37, 41); letter-spacing: 0.11px;">Entries</span>
<span class="t " style="left: 1424.9px; top: 289.8px; font-size: 16px; font-weight: 700; color: rgb(33, 37, 41); letter-spacing: 0.37px;">Hits</span>
<span class="t " style="left: 210.4px; top: 330.9px; font-size: 16px; color: rgb(33, 37, 41); letter-spacing: 0.18px;">ThreatFox</span>
<div class="en" style="top:331px"></div>
<span class="t " style="left: 607px; top: 332.2px; font-size: 12px; font-weight: 700; color: rgb(255, 255, 255); letter-spacing: -0.07px;">Enabled</span>
<span class="t " style="left: 740.8px; top: 330.9px; font-size: 16px; color: rgb(33, 37, 41); letter-spacing: 0.33px;">Malware</span>
<span class="t " style="left: 946.7px; top: 330.9px; font-size: 16px; color: rgb(33, 37, 41); letter-spacing: 0.03px;">Daily</span>
<span class="t " style="left: 1149.2px; top: 330.9px; font-size: 16px; color: rgb(33, 37, 41); letter-spacing: 0.03px;">07:08</span>
<span class="t " style="left: 1311px; top: 330.9px; font-size: 16px; color: rgb(33, 37, 41); letter-spacing: 0.19px;">11,838</span>
<span class="t " style="left: 210.4px; top: 370.9px; font-size: 16px; color: rgb(33, 37, 41); letter-spacing: 0.09px;">IPsum Threat Intelligence Feed</span>
<div class="en" style="top:371px"></div>
<span class="t " style="left: 607px; top: 372.2px; font-size: 12px; font-weight: 700; color: rgb(255, 255, 255); letter-spacing: -0.07px;">Enabled</span>
<span class="t " style="left: 740.8px; top: 370.9px; font-size: 16px; color: rgb(33, 37, 41); letter-spacing: 0.33px;">Malware</span>
<span class="t " style="left: 946.7px; top: 370.9px; font-size: 16px; color: rgb(33, 37, 41); letter-spacing: 0.03px;">Daily</span>
<span class="t " style="left: 1149.2px; top: 370.9px; font-size: 16px; color: rgb(33, 37, 41); letter-spacing: 0.03px;">07:09</span>
<span class="t " style="left: 1311px; top: 370.9px; font-size: 16px; color: rgb(33, 37, 41);">34,576</span>
<span class="t " style="left: 210.4px; top: 410.9px; font-size: 16px; color: rgb(33, 37, 41); letter-spacing: -0.03px;">dshield 7 days</span>
<div class="en" style="top:411px"></div>
<span class="t " style="left: 607px; top: 412.2px; font-size: 12px; font-weight: 700; color: rgb(255, 255, 255); letter-spacing: -0.07px;">Enabled</span>
<span class="t " style="left: 740.8px; top: 410.9px; font-size: 16px; color: rgb(33, 37, 41); letter-spacing: 0.33px;">Malware</span>
<span class="t " style="left: 946.7px; top: 410.9px; font-size: 16px; color: rgb(33, 37, 41); letter-spacing: 0.03px;">Daily</span>
<span class="t " style="left: 1149.2px; top: 410.9px; font-size: 16px; color: rgb(33, 37, 41); letter-spacing: 0.03px;">07:08</span>
<span class="t " style="left: 1326.1px; top: 410.9px; font-size: 16px; color: rgb(33, 37, 41); letter-spacing: 0.5px;">29</span>
<div class="ab" style="top:404px"><svg style="left:8.300px;top:9.800px" width="13" height="12" viewBox="0 0 13 12" stroke="#fff" stroke-width="1.500"><path d="M.5 1.200h11.300M.5 4.200h11.300M.5 7.200h11.300M.5 10.400h11.300"></path></svg><div class="a" style="left:22.900px;top:13px;width:0;height:0;border-top:4.400px solid #fff;border-left:4.100px solid transparent;border-right:4.100px solid transparent"></div></div>
<span class="t " style="left: 210.4px; top: 450.9px; font-size: 16px; color: rgb(33, 37, 41); letter-spacing: -0.13px;">SSLBL Botnet C2 IP Blacklist</span>
<div class="en" style="top:451px"></div>
<span class="t " style="left: 607px; top: 452.2px; font-size: 12px; font-weight: 700; color: rgb(255, 255, 255); letter-spacing: -0.07px;">Enabled</span>
<span class="t " style="left: 740.8px; top: 450.9px; font-size: 16px; color: rgb(33, 37, 41); letter-spacing: 0.33px;">Malware</span>
<span class="t " style="left: 946.7px; top: 450.9px; font-size: 16px; color: rgb(33, 37, 41); letter-spacing: 0.03px;">Daily</span>
<span class="t " style="left: 1149.2px; top: 450.9px; font-size: 16px; color: rgb(33, 37, 41); letter-spacing: 0.03px;">07:09</span>
<span class="t " style="left: 1326.1px; top: 450.9px; font-size: 16px; color: rgb(33, 37, 41); letter-spacing: 0.5px;">43</span>
<div class="ab" style="top:444px"><svg style="left:8.300px;top:9.800px" width="13" height="12" viewBox="0 0 13 12" stroke="#fff" stroke-width="1.500"><path d="M.5 1.200h11.300M.5 4.200h11.300M.5 7.200h11.300M.5 10.400h11.300"></path></svg><div class="a" style="left:22.900px;top:13px;width:0;height:0;border-top:4.400px solid #fff;border-left:4.100px solid transparent;border-right:4.100px solid transparent"></div></div>
<span class="t " style="left: 210.4px; top: 490.9px; font-size: 16px; color: rgb(33, 37, 41); letter-spacing: 0.12px;">Stratosphere Lab</span>
<div class="en" style="top:491px"></div>
<span class="t " style="left: 607px; top: 492.2px; font-size: 12px; font-weight: 700; color: rgb(255, 255, 255); letter-spacing: -0.07px;">Enabled</span>
<span class="t " style="left: 740.8px; top: 490.9px; font-size: 16px; color: rgb(33, 37, 41); letter-spacing: 0.33px;">Malware</span>
<span class="t " style="left: 946.7px; top: 490.9px; font-size: 16px; color: rgb(33, 37, 41); letter-spacing: 0.03px;">Daily</span>
<span class="t " style="left: 1149.2px; top: 490.9px; font-size: 16px; color: rgb(33, 37, 41); letter-spacing: 0.03px;">07:08</span>
<span class="t " style="left: 1311px; top: 490.9px; font-size: 16px; color: rgb(33, 37, 41);">10,710</span>
<div class="ab" style="top:484px"><svg style="left:8.300px;top:9.800px" width="13" height="12" viewBox="0 0 13 12" stroke="#fff" stroke-width="1.500"><path d="M.5 1.200h11.300M.5 4.200h11.300M.5 7.200h11.300M.5 10.400h11.300"></path></svg><div class="a" style="left:22.900px;top:13px;width:0;height:0;border-top:4.400px solid #fff;border-left:4.100px solid transparent;border-right:4.100px solid transparent"></div></div>
<span class="t " style="left: 210.4px; top: 530.9px; font-size: 16px; color: rgb(33, 37, 41); letter-spacing: 0.13px;">Emerging Threats</span>
<div class="en" style="top:531px"></div>
<span class="t " style="left: 607px; top: 532.2px; font-size: 12px; font-weight: 700; color: rgb(255, 255, 255); letter-spacing: -0.07px;">Enabled</span>
<span class="t " style="left: 740.8px; top: 530.9px; font-size: 16px; color: rgb(33, 37, 41); letter-spacing: 0.33px;">Malware</span>
<span class="t " style="left: 946.7px; top: 530.9px; font-size: 16px; color: rgb(33, 37, 41); letter-spacing: 0.03px;">Daily</span>
<span class="t " style="left: 1149.2px; top: 530.9px; font-size: 16px; color: rgb(33, 37, 41); letter-spacing: 0.03px;">07:10</span>
<span class="t " style="left: 1315.5px; top: 530.9px; font-size: 16px; color: rgb(33, 37, 41);">1,408</span>
<div class="ab" style="top:524px"><svg style="left:8.300px;top:9.800px" width="13" height="12" viewBox="0 0 13 12" stroke="#fff" stroke-width="1.500"><path d="M.5 1.200h11.300M.5 4.200h11.300M.5 7.200h11.300M.5 10.400h11.300"></path></svg><div class="a" style="left:22.900px;top:13px;width:0;height:0;border-top:4.400px solid #fff;border-left:4.100px solid transparent;border-right:4.100px solid transparent"></div></div>
<span class="t " style="left: 210.4px; top: 570.9px; font-size: 16px; color: rgb(33, 37, 41); letter-spacing: -0.31px;">Abuse.ch URLhaus</span>
<div class="en" style="top:571px"></div>
<span class="t " style="left: 607px; top: 572.2px; font-size: 12px; font-weight: 700; color: rgb(255, 255, 255); letter-spacing: -0.07px;">Enabled</span>
<span class="t " style="left: 740.8px; top: 570.9px; font-size: 16px; color: rgb(33, 37, 41); letter-spacing: 0.33px;">Malware</span>
<span class="t " style="left: 946.7px; top: 570.9px; font-size: 16px; color: rgb(33, 37, 41); letter-spacing: 0.03px;">Daily</span>
<span class="t " style="left: 1149.2px; top: 570.9px; font-size: 16px; color: rgb(33, 37, 41); letter-spacing: 0.27px;">07:11</span>
<span class="t " style="left: 1321.6px; top: 570.9px; font-size: 16px; color: rgb(33, 37, 41); letter-spacing: 0.33px;">182</span>
<div class="ab" style="top:564px"><svg style="left:8.300px;top:9.800px" width="13" height="12" viewBox="0 0 13 12" stroke="#fff" stroke-width="1.500"><path d="M.5 1.200h11.300M.5 4.200h11.300M.5 7.200h11.300M.5 10.400h11.300"></path></svg><div class="a" style="left:22.900px;top:13px;width:0;height:0;border-top:4.400px solid #fff;border-left:4.100px solid transparent;border-right:4.100px solid transparent"></div></div>
<span class="t " style="left: 210.4px; top: 610.9px; font-size: 16px; color: rgb(33, 37, 41); letter-spacing: 0.15px;">NoCoin Filter List</span>
<div class="en" style="top:611px"></div>
<span class="t " style="left: 607px; top: 612.2px; font-size: 12px; font-weight: 700; color: rgb(255, 255, 255); letter-spacing: -0.07px;">Enabled</span>
<span class="t " style="left: 747.4px; top: 610.9px; font-size: 16px; color: rgb(33, 37, 41); letter-spacing: 0.39px;">Mining</span>
<span class="t " style="left: 946.7px; top: 610.9px; font-size: 16px; color: rgb(33, 37, 41); letter-spacing: 0.03px;">Daily</span>
<span class="t " style="left: 1149.2px; top: 610.9px; font-size: 16px; color: rgb(33, 37, 41); letter-spacing: 0.03px;">07:09</span>
<span class="t " style="left: 1321.6px; top: 610.9px; font-size: 16px; color: rgb(33, 37, 41); letter-spacing: 0.33px;">409</span>
<div class="ab" style="top:604px"><svg style="left:8.300px;top:9.800px" width="13" height="12" viewBox="0 0 13 12" stroke="#fff" stroke-width="1.500"><path d="M.5 1.200h11.300M.5 4.200h11.300M.5 7.200h11.300M.5 10.400h11.300"></path></svg><div class="a" style="left:22.900px;top:13px;width:0;height:0;border-top:4.400px solid #fff;border-left:4.100px solid transparent;border-right:4.100px solid transparent"></div></div>
<div class="a" style="left:97.500px;top:269px;width:96.200px;height:131px;background:#fff;border:1px solid #d3d7db;border-top:none;border-radius:0 0 5px 5px"></div>
<div class="a" style="left:110px;top:276px;width:71px;height:31px;border:1px solid #c4c8cc;border-radius:4px;background:#fff"></div>
<div class="a" style="left:98px;top:313px;width:95px;height:58px;background:#186df6"></div>
<span class="t " style="left: 105.8px; top: 318.3px; font-size: 14px; color: rgb(23, 47, 102); letter-spacing: 0.03px;">Enabled</span>
<span class="t " style="left: 105.8px; top: 347.4px; font-size: 14px; color: rgb(23, 47, 102); letter-spacing: 0.09px;">Disabled</span>
<span class="t " style="left: 105.8px; top: 376.4px; font-size: 14px; color: rgb(33, 37, 41); letter-spacing: 0.45px;">All</span>
<svg style="left:0;top:0" width="1630" height="965" viewBox="0 0 1630 965" fill="none" stroke="#0596fb" stroke-linecap="round" stroke-linejoin="round"><g transform="translate(0,0)"><path d="M193 247L205 242.600C215 241.300 225 241.300 232 241.400C255 241.800 280 242.600 290 243C310 244 325 245.200 336.500 246A2.600 2.600 0 0 1 336.500 251.200C320 251.500 300 251.700 290 251.700C265 251.700 245 251.600 230 251.700L210 252.400Z" fill="#0596fb" stroke-width="1"></path><path d="M193.500 247L225.300 229.200" stroke-width="7"></path><path d="M194 248.500L233.500 268.800" stroke-width="8.800"></path></g><g transform="translate(9.2,110.6)"><path d="M193 247L205 242.600C215 241.300 225 241.300 232 241.400C255 241.800 280 242.600 290 243C310 244 325 245.200 336.500 246A2.600 2.600 0 0 1 336.500 251.200C320 251.500 300 251.700 290 251.700C265 251.700 245 251.600 230 251.700L210 252.400Z" fill="#0596fb" stroke-width="1"></path><path d="M193.500 247L225.300 229.200" stroke-width="7"></path><path d="M194 248.500L233.500 268.800" stroke-width="8.800"></path></g><circle cx="381" cy="247" r="28" fill="#0596fb" stroke="none"></circle><circle cx="402" cy="357.500" r="28" fill="#0596fb" stroke="none"></circle></svg>
<span class="t" style="left:361px;top:222.400px;width:40px;height:50px;line-height:50px;font-size:44px;font-weight:700;color:#fff;text-align:center;transform:scaleX(1.09);transform-origin:25px 25px">1</span>
<div class="a" style="left:367.500px;top:256px;width:11.300px;height:7.500px;background:#0596fb"></div><div class="a" style="left:385.500px;top:256px;width:9px;height:7.500px;background:#0596fb"></div>
<span class="t" style="left:382.200px;top:333.400px;width:40px;height:50px;line-height:50px;font-size:46px;font-weight:700;color:#fff;text-align:center;transform:scaleX(1.09)">2</span>
<svg style="left:0;top:0" width="300" height="400" viewBox="0 0 300 400"><path d="M172.600 363a1.600 1.600 0 0 1 3.200 0V367.700L177.800 367.500c.8-.5 1.800-.3 2.200.4.900-.4 1.800-.1 2.100.6.900-.2 1.800.4 1.800 1.300V374c0 2.600-1.400 4.300-3.800 4.300H176.600c-1.500 0-2.500-.7-3.300-1.900L169.300 372.700c-.6-.9.400-1.900 1.400-1.400L172.600 372.500Z" fill="#262626" stroke="#fff" stroke-width="1.100" stroke-linejoin="round"></path></svg>
<div class="a" style="left:0;top:963.600px;width:1630px;height:1.400px;background:linear-gradient(90deg,#1c0517 0,#2a0820 1500px,#5a0c1e 1630px)"></div>
<div class="a" style="left:0;top:8px;width:1px;height:957px;background:linear-gradient(180deg,#14040f 0,#1a0516 700px,#300b29 860px,#300b29 957px)"></div>

</body></html>
